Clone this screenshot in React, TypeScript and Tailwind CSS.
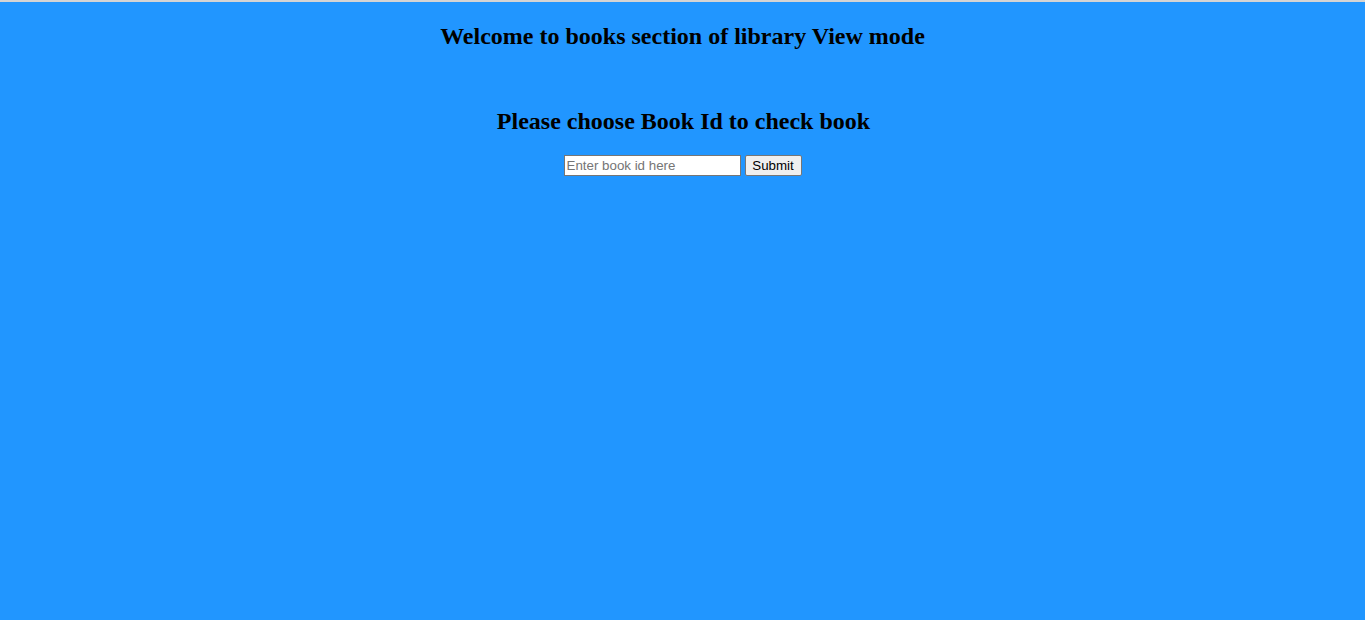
export default function App() {
  return (
    <div className="min-h-[620px] bg-[#2196ff] border-t-2 border-[#d4d4d4] flex flex-col items-center font-['Liberation_Serif',serif] text-black">
      {/* headings */}
      <h2 className="mt-[20px] text-[24px] leading-[28px] font-bold">Welcome to books section of library View mode</h2>
      <h2 className="mt-[57px] pl-[2px] text-[24px] leading-[28px] font-bold">Please choose Book Id to check book</h2>

      {/* search form */}
      <form className="mt-[20px] flex items-center gap-[4px] font-['Liberation_Sans',sans-serif] text-[13.33px]" onSubmit={(e) => e.preventDefault()}>
        <input
          type="text"
          placeholder="Enter book id here"
          className="w-[177px] h-[21px] px-[2px] bg-white border border-[#767676] placeholder:text-[#757575] outline-none"
        />
        <button type="submit" className="w-[57px] h-[21px] bg-[#efefef] border border-[#767676] rounded-[2px]">
          Submit
        </button>
      </form>
    </div>
  );
}
